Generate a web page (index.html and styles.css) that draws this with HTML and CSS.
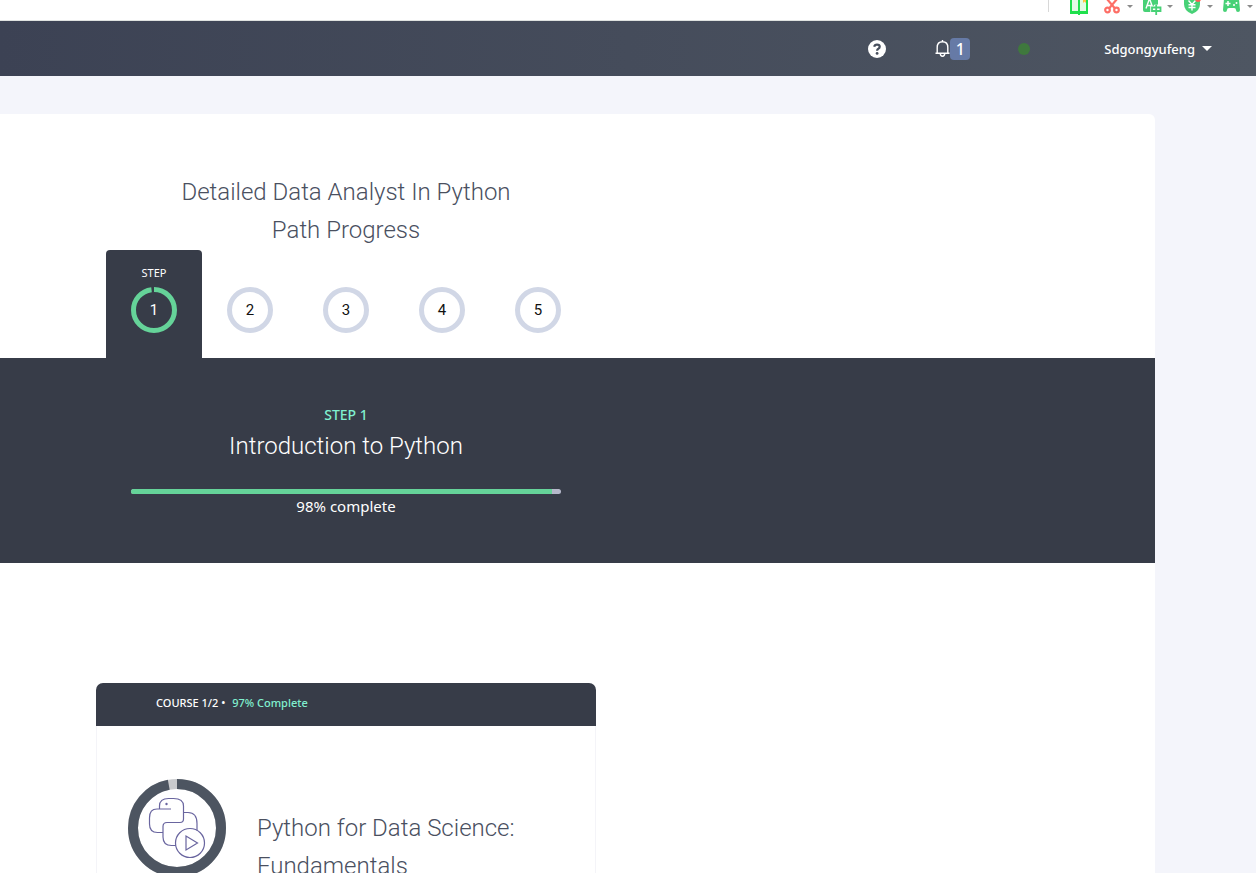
FILE: index.html
```html
<!DOCTYPE html>
<html lang="en">
<head>
<meta charset="utf-8">
<meta name="viewport" content="width=device-width, initial-scale=1">
<title>Data Analyst In Python</title>
<link rel="stylesheet" href="styles.css">
</head>
<body>
<div class="toolbar">
  <button class="tool tool-book" aria-label="Reader">
    <svg width="18" height="15" viewBox="0 0 18 15"><rect x="0" y="-4" width="18" height="18" fill="#1fe04c"/><path d="M2 -2h6v13H2zM10 -2h6v13h-6z" fill="#e2fbe4"/><path d="M8 12h2v3H8z" fill="#1fe04c"/><path d="M13 0h3v3l-1.500-1.500L13 3z" fill="#ffc33d"/></svg>
  </button>
  <button class="tool" aria-label="Screenshot">
    <svg width="17" height="15" viewBox="-1 0 17 15" fill="none" stroke="#fd6e66" stroke-width="2.200"><path d="M3 -1L11 8.500M13 -1L5 8.500"/><circle cx="3.500" cy="10" r="2.300"/><circle cx="12.500" cy="10" r="2.300"/></svg>
    <span class="arrow"></span>
  </button>
  <button class="tool" aria-label="Translate">
    <svg width="19" height="15" viewBox="0 0 19 15"><path d="M0 -2h15v7h-4v2H8v5H2q-2 0-2-2z" fill="#47d176"/><path d="M3 8.500L6 0h1l2.500 7M4 5.500h4.500" fill="none" stroke="#fff" stroke-width="1.400"/><path d="M9 7.500h8.500v3.500H9zM13.200 4.500V15" fill="none" stroke="#fff" stroke-width="3.500"/><path d="M9 7.500h8.500v3.500H9zM13.200 4.500V15" fill="none" stroke="#47d176" stroke-width="1.800"/></svg>
    <span class="arrow"></span>
  </button>
  <button class="tool" aria-label="Payment shield">
    <svg width="18" height="15" viewBox="-1 0 18 15"><path d="M0 -1h16v5q0 7-8 10Q0 11 0 4z" fill="#47d176"/><path d="M4.500 .5l3.500 4 3.500-4M4.500 4.800h7M4.500 7.500h7M8 4v6.500" stroke="#fff" stroke-width="1.400" fill="none"/><circle cx="14" cy="-1" r="3" fill="#ff5d55"/></svg>
    <span class="arrow"></span>
  </button>
  <button class="tool" aria-label="Games">
    <svg width="18" height="15" viewBox="0 0 18 15"><path d="M1 -1h15l1 11q0 2-2 2t-2-2-2-2H6q-2 0-2 2t-2 2-2-2z" fill="#47d176"/><path d="M2.500 3.500h5M5 1v5" stroke="#fff" stroke-width="1.500"/><circle cx="11" cy="5" r="1" fill="#fff"/><circle cx="13.500" cy="3" r="1" fill="#fff"/></svg>
    <span class="arrow"></span>
  </button>
</div>
<header class="topbar">
  <button class="icon-button help" aria-label="Help">
    <svg width="18" height="18" viewBox="0 0 18 18"><circle cx="9" cy="9" r="9" fill="#fff"/><path d="M6.200 6.800Q6.600 4.600 9 4.600q2.700 0 2.700 2.200 0 1.200-1.400 2Q9.100 9.400 9.100 10.800" fill="none" stroke="#474f5d" stroke-width="2.200"/><circle cx="9.100" cy="13.400" r="1.400" fill="#474f5d"/></svg>
  </button>
  <button class="icon-button alerts" aria-label="Notifications, 1 new">
    <svg width="15" height="17" viewBox="0 0 15 17" fill="none" stroke="#fff" stroke-width="1.400"><path d="M7.500 0v2M.5 13.200h14M2.200 13V7.500q0-5.700 5.300-5.700t5.300 5.700V13M5.300 13.500q0 2.700 2.200 2.700t2.200-2.700"/></svg>
    <span class="count">1</span>
  </button>
  <span class="status" role="img" aria-label="Online"></span>
  <button class="icon-button user">Sdgongyufeng <span class="caret"></span></button>
</header>
<main class="panel">
  <div class="column">
    <h1 class="title">Detailed Data Analyst In Python<br>Path Progress</h1>
    <nav class="steps" aria-label="Steps">
      <button class="step current">
        <span class="step-label">STEP</span>
        <span class="dial"><svg width="46" height="46" viewBox="0 0 46 46"><circle class="done" cx="23" cy="23" r="20.500" pathLength="100"/></svg><span class="number">1</span></span>
      </button>
      <button class="step"><span class="dial ring"><span class="number">2</span></span></button>
      <button class="step"><span class="dial ring"><span class="number">3</span></span></button>
      <button class="step"><span class="dial ring"><span class="number">4</span></span></button>
      <button class="step"><span class="dial ring"><span class="number">5</span></span></button>
    </nav>
  </div>
  <section class="band">
    <div class="column">
      <p class="eyebrow">STEP 1</p>
      <h2 class="band-title">Introduction to Python</h2>
      <div class="bar"><div class="bar-fill" style="width: 98%"></div></div>
      <p class="percent">98% complete</p>
    </div>
  </section>
  <div class="column">
    <article class="card">
      <div class="card-head">COURSE 1/2 • <span class="card-done">97% Complete</span></div>
      <div class="card-body">
        <svg class="badge" width="98" height="98" viewBox="0 0 98 98" fill="none">
          <circle cx="49" cy="49" r="44" stroke="#c9cacd" stroke-width="10"/>
          <circle cx="49" cy="49" r="44" stroke="#4d5561" stroke-width="10" pathLength="100" stroke-dasharray="97 100" transform="rotate(-90 49 49)"/>
          <g stroke="#69659f" stroke-width="1.200">
            <path d="M43 30H29q-7.500 0-7.500 9v6q0 8.500 8 8.500h5.500M31.500 30v-3q0-7.500 9-7.500h5q10 0 10 7.500v13q0 3.500-3.500 3.500H39q-4 0-4 4V58q0 8.500 8.500 8.500H48M55.500 33.500h4.500q9 0 9 11v7"/>
            <circle cx="62" cy="64" r="14.500"/>
            <path d="M58 57v14l11.500-7z"/>
          </g>
          <circle cx="38.500" cy="25" r="1.200" fill="#69659f"/>
        </svg>
        <h3 class="course">Python for Data Science: Fundamentals</h3>
      </div>
    </article>
  </div>
</main>
</body>
</html>
```

FILE: styles.css
```css
* { box-sizing: border-box; }

html { overflow: hidden; }

body {
  margin: 0;
  background: #f4f5fb;
  color: #4a505f;
  font-family: "Noto Sans", sans-serif;
}

h1, h2, h3, p { margin: 0; }

button {
  padding: 0;
  border: 0;
  background: none;
  color: inherit;
  font: inherit;
}

svg { display: block; }

.toolbar {
  display: flex;
  justify-content: flex-end;
  height: 21px;
  background: #fff;
  border-bottom: 1px solid #dfe2e0;
}

.tool {
  display: flex;
  align-items: flex-start;
  justify-content: space-between;
  width: 30px;
  margin-left: 10px;
}

.tool:last-child { margin-right: 3px; }

.tool-book {
  width: 46px;
  height: 12px;
  margin-left: 0;
  padding-left: 21px;
  border-left: 1px solid #d8d8d8;
  margin-right: -1px;
}

.arrow {
  margin-top: 5px;
  border: 3px solid transparent;
  border-top-color: #8b8b8b;
  border-bottom: 0;
}

.topbar {
  display: flex;
  align-items: center;
  justify-content: flex-end;
  height: 55px;
  padding-right: 44px;
  background: linear-gradient(90deg, #3c4254, #4e5662);
  color: #fff;
}

.icon-button {
  display: flex;
  align-items: center;
}

.count {
  width: 20px;
  height: 22px;
  border-radius: 4px;
  background: #667aa6;
  font-size: 16px;
  font-weight: 500;
  line-height: 22px;
}

.help { margin-right: 49px; }

.alerts { margin-right: 48px; }

.status {
  width: 12px;
  height: 12px;
  margin-right: 74px;
  border-radius: 50%;
  background: #3f783d;
}

.user {
  gap: 7px;
  font-size: 13px;
  font-weight: 500;
  line-height: 20px;
}

.caret {
  border: 5px solid transparent;
  border-top-color: #fff;
  border-bottom: 0;
}

.panel {
  margin: 38px 101px 0 0;
  padding: 59px 0 40px;
  border-top-right-radius: 6px;
  background: #fff;
}

.column {
  max-width: 500px;
  margin-left: 96px;
}

.title, .band-title, .course {
  font-family: Roboto, sans-serif;
  font-size: 24px;
  font-weight: 300;
  line-height: 38px;
}

.title { text-align: center; }

.steps {
  display: grid;
  grid-template-columns: repeat(5, 1fr);
  margin: 1px 10px 0;
}

.step {
  display: flex;
  flex-direction: column;
  align-items: center;
  justify-content: flex-end;
  height: 108px;
  padding-bottom: 25px;
  color: #111;
}

.current {
  border-radius: 4px 4px 0 0;
  background: #373c48;
  color: #fff;
}

.step-label {
  margin-bottom: 6px;
  font-size: 11px;
  line-height: 16px;
}

.dial {
  display: grid;
  place-items: center;
  width: 46px;
  height: 46px;
  border-radius: 50%;
  font-family: Roboto, sans-serif;
  font-size: 15px;
  line-height: 18px;
}

.dial > * { grid-area: 1 / 1; }

.ring { border: 5px solid #d1d7e6; }

.done {
  fill: none;
  stroke: #65d399;
  stroke-width: 5;
  stroke-dasharray: 98 100;
  transform: rotate(-90deg);
  transform-origin: center;
}

.band {
  padding: 45px 0;
  background: #373c48;
  color: #fff;
  text-align: center;
}

.eyebrow {
  color: #80f0cf;
  font-size: 14px;
  font-weight: 500;
  line-height: 24px;
}

.bar {
  height: 5px;
  margin: 24px 35px 0;
  border-radius: 3px;
  background: #b5b8ca;
  overflow: hidden;
}

.bar-fill {
  height: 100%;
  background: #65d399;
}

.percent {
  font-size: 15px;
  line-height: 24px;
}

.card {
  margin-top: 120px;
  border: 1px solid #f4f4f8;
  border-top: 0;
  border-radius: 7px 7px 0 0;
}

.card-head {
  height: 43px;
  margin: 0 -1px;
  padding-left: 60px;
  border-radius: 7px 7px 0 0;
  background: #373c48;
  color: #fff;
  font-size: 11px;
  font-weight: 500;
  line-height: 40px;
}

.card-done {
  margin-left: 4px;
  color: #80f0cf;
}

.card-body {
  display: flex;
  gap: 31px;
  padding: 53px 31px 60px;
}

.badge { flex: none; }

.course { padding-top: 30px; }
```
